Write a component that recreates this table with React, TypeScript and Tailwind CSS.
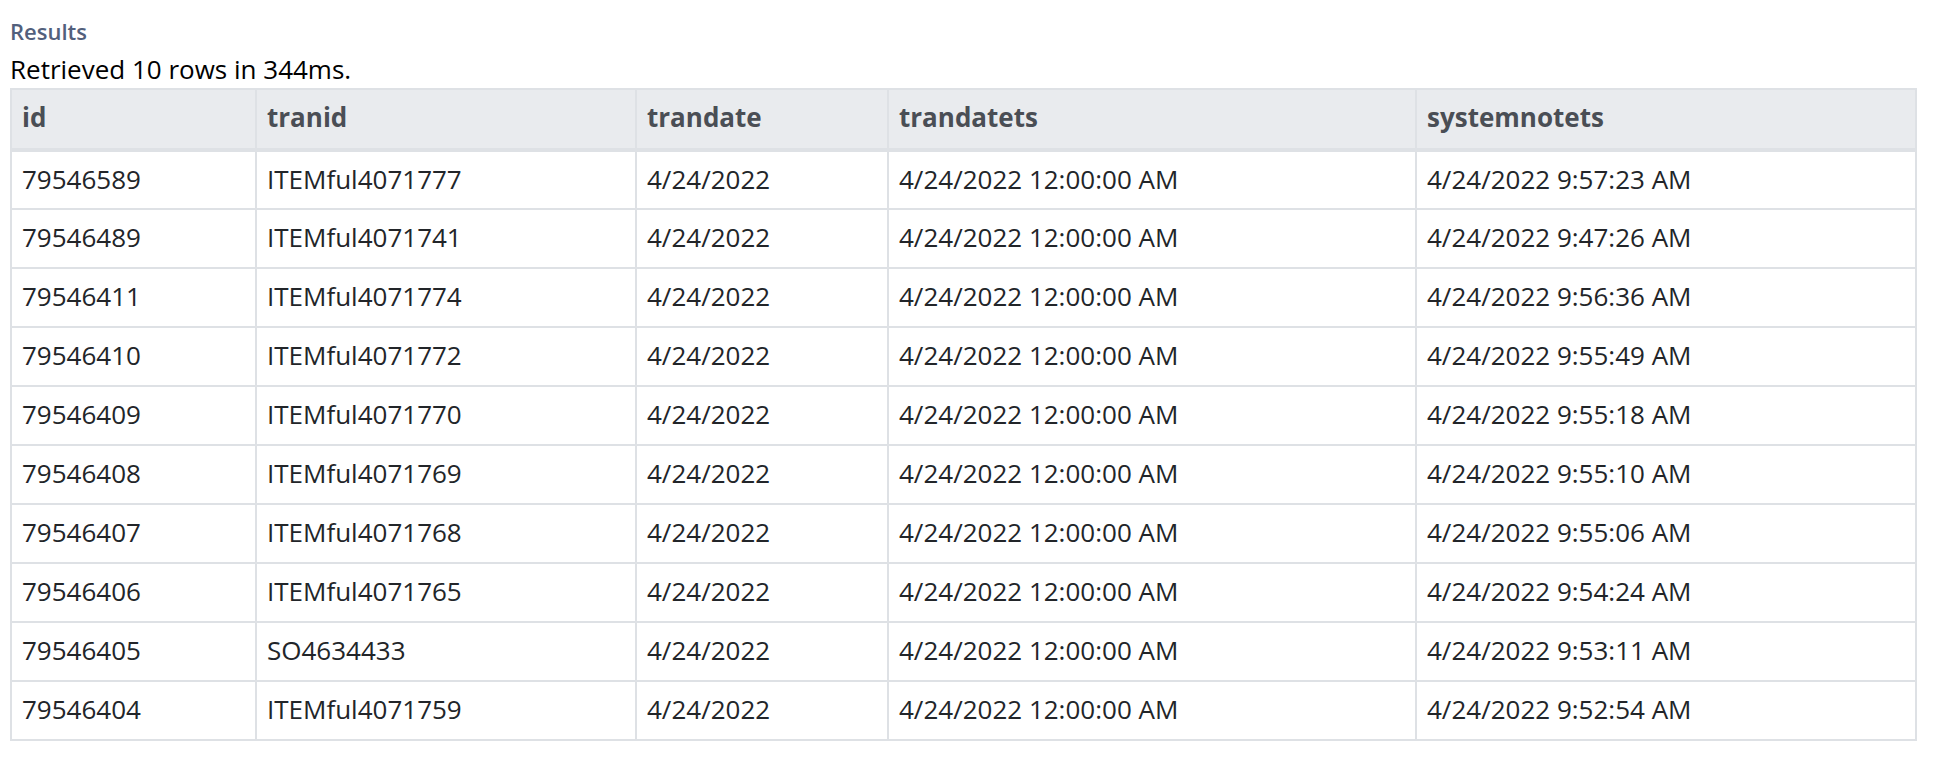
const columns = ['id', 'tranid', 'trandate', 'trandatets', 'systemnotets'];

const rows = [
  ['79546589', 'ITEMful4071777', '4/24/2022', '4/24/2022 12:00:00 AM', '4/24/2022 9:57:23 AM'],
  ['79546489', 'ITEMful4071741', '4/24/2022', '4/24/2022 12:00:00 AM', '4/24/2022 9:47:26 AM'],
  ['79546411', 'ITEMful4071774', '4/24/2022', '4/24/2022 12:00:00 AM', '4/24/2022 9:56:36 AM'],
  ['79546410', 'ITEMful4071772', '4/24/2022', '4/24/2022 12:00:00 AM', '4/24/2022 9:55:49 AM'],
  ['79546409', 'ITEMful4071770', '4/24/2022', '4/24/2022 12:00:00 AM', '4/24/2022 9:55:18 AM'],
  ['79546408', 'ITEMful4071769', '4/24/2022', '4/24/2022 12:00:00 AM', '4/24/2022 9:55:10 AM'],
  ['79546407', 'ITEMful4071768', '4/24/2022', '4/24/2022 12:00:00 AM', '4/24/2022 9:55:06 AM'],
  ['79546406', 'ITEMful4071765', '4/24/2022', '4/24/2022 12:00:00 AM', '4/24/2022 9:54:24 AM'],
  ['79546405', 'SO4634433', '4/24/2022', '4/24/2022 12:00:00 AM', '4/24/2022 9:53:11 AM'],
  ['79546404', 'ITEMful4071759', '4/24/2022', '4/24/2022 12:00:00 AM', '4/24/2022 9:52:54 AM'],
];

export default function App() {
  return (
    <div className="min-h-screen bg-white px-[10px] pt-[17px] font-['Open_Sans',sans-serif]">
      <div className="text-[22px] leading-[28px] font-semibold text-[#52607c]">Results</div>
      <div className="mt-[7px] text-[26px] leading-[34px] text-black">Retrieved 10 rows in 344ms.</div>
      <table className="mt-[2px] w-[1907px] table-fixed border-collapse border-2 border-[#dee1e5] text-[26px]">
        <colgroup>
          <col className="w-[245px]" />
          <col className="w-[380px]" />
          <col className="w-[252px]" />
          <col className="w-[528px]" />
          <col />
        </colgroup>
        <thead>
          <tr className="h-[61px] bg-[#e9ebee]">
            {columns.map((c) => (
              <th
                key={c}
                className="border-2 border-b-[4px] border-[#dee1e5] px-[10px] pb-[4px] text-left font-bold text-[#4a4e55]"
              >
                {c}
              </th>
            ))}
          </tr>
        </thead>
        <tbody>
          {rows.map((r) => (
            <tr key={r[0]} className="h-[59px]">
              {r.map((v, i) => (
                <td key={i} className="border-2 border-[#dee1e5] px-[10px] pb-[2px] text-[#222529]">
                  {v}
                </td>
              ))}
            </tr>
          ))}
        </tbody>
      </table>
    </div>
  );
}
